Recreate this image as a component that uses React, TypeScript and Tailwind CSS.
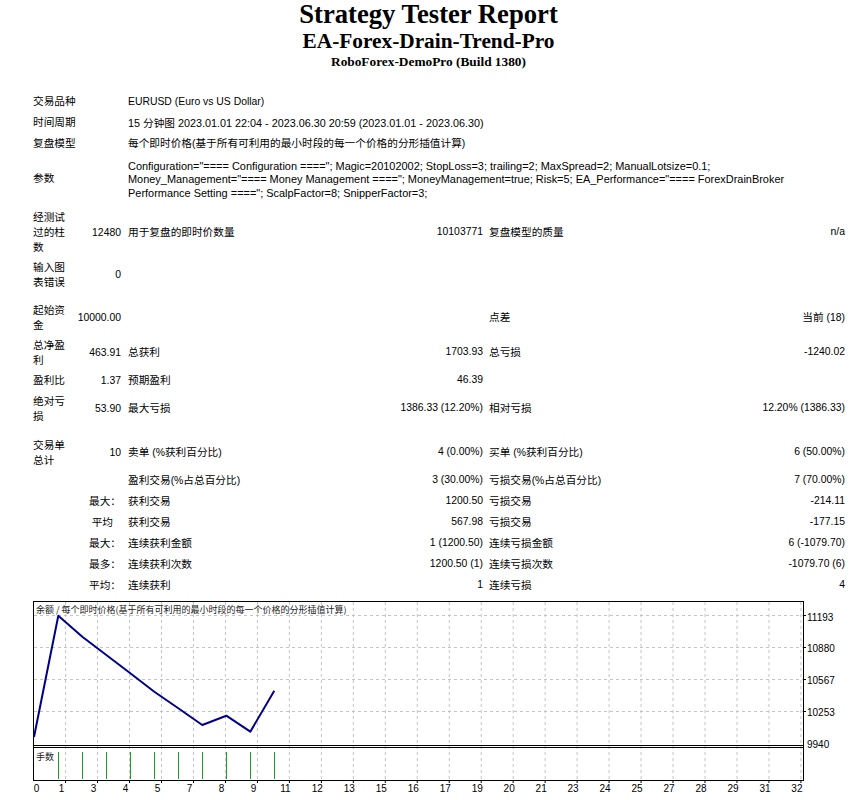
const cjkRun = /([\u2e80-\u9fff\u3000-\u303f\uff00-\uffef]+)/;

// Latin runs stay at the narrower size, CJK runs get 8pt like the report
function T({ s }: { s?: string }) {
  if (!s) return null;
  return (
    <>
      {s.split(cjkRun).map((p, i) =>
        i % 2 ? (
          <span key={i} className="text-[10.67px]">
            {p}
          </span>
        ) : (
          p
        )
      )}
    </>
  );
}

type Stat = {
  h: string;
  a?: string;
  b?: string;
  c?: string;
  d?: string;
  e?: string;
  f?: string;
  pad?: boolean;
};

const stats: (Stat | string)[] = [
  'h-[6px]',
  { h: 'h-[49px]', a: '经测试过的柱数', b: '12480', c: '用于复盘的即时价数量', d: '10103771', e: '复盘模型的质量', f: 'n/a' },
  { h: 'h-[35px]', a: '输入图表错误', b: '0' },
  'h-[8px]',
  { h: 'h-[35px]', a: '起始资金', b: '10000.00', e: '点差', f: '当前 (18)' },
  { h: 'h-[35px]', a: '总净盈利', b: '463.91', c: '总获利', d: '1703.93', e: '总亏损', f: '-1240.02' },
  { h: 'h-[21px]', a: '盈利比', b: '1.37', c: '预期盈利', d: '46.39' },
  { h: 'h-[35px]', a: '绝对亏损', b: '53.90', c: '最大亏损', d: '1386.33 (12.20%)', e: '相对亏损', f: '12.20% (1386.33)' },
  'h-[9px]',
  { h: 'h-[35px]', a: '交易单总计', b: '10', c: '卖单 (%获利百分比)', d: '4 (0.00%)', e: '买单 (%获利百分比)', f: '6 (50.00%)' },
  { h: 'h-[21px]', c: '盈利交易(%占总百分比)', d: '3 (30.00%)', e: '亏损交易(%占总百分比)', f: '7 (70.00%)' },
  { h: 'h-[21px]', b: '最大：', c: '获利交易', d: '1200.50', e: '亏损交易', f: '-214.11' },
  { h: 'h-[21px]', b: '平均', c: '获利交易', d: '567.98', e: '亏损交易', f: '-177.15', pad: true },
  { h: 'h-[21px]', b: '最大：', c: '连续获利金额', d: '1 (1200.50)', e: '连续亏损金额', f: '6 (-1079.70)' },
  { h: 'h-[21px]', b: '最多：', c: '连续获利次数', d: '1200.50 (1)', e: '连续亏损次数', f: '-1079.70 (6)' },
  { h: 'h-[21px]', b: '平均：', c: '连续获利', d: '1', e: '连续亏损', f: '4' },
];

const info = [
  ['交易品种', 'EURUSD (Euro vs US Dollar)', ''],
  ['时间周期', '15 分钟图 2023.01.01 22:04 - 2023.06.30 20:59 (2023.01.01 - 2023.06.30)', 'text-[10.8px]'],
  ['复盘模型', '每个即时价格(基于所有可利用的最小时段的每一个价格的分形插值计算)', ''],
];

const params = [
  'Configuration="==== Configuration ===="; Magic=20102002; StopLoss=3; trailing=2; MaxSpread=2; ManualLotsize=0.1;',
  'Money_Management="==== Money Management ===="; MoneyManagement=true; Risk=5; EA_Performance="==== ForexDrainBroker',
  'Performance Setting ===="; ScalpFactor=8; SnipperFactor=3;',
];

const gridX = Array.from({ length: 24 }, (_, i) => 65.6 + i * 31.97);
const xLabels = ['1', '3', '4', '5', '7', '8', '9', '11', '12', '13', '15', '16', '17', '19', '20', '21', '23', '24', '25', '27', '28', '29', '31', '32'];
const gridY = [615.5, 647.5, 679.5, 711.5];
const yLabels = [
  ['11193', 617],
  ['10880', 648],
  ['10567', 680],
  ['10253', 712],
  ['9940', 744],
] as const;
const balance: [number, number][] = [
  [34, 737],
  [58.3, 615.7],
  [82.3, 636.7],
  [106.3, 655],
  [130.3, 673.3],
  [154.3, 691.7],
  [178.3, 708.3],
  [202.3, 725],
  [226.3, 715.7],
  [250.3, 731.7],
  [274.3, 690.7],
];
const lots = [58.5, 82.5, 106.5, 130.5, 154.5, 178.5, 202.5, 226.5, 250.5, 274.5];

function BalanceChart() {
  return (
    <svg width="857" height="204" className="block" fontFamily="'Liberation Sans', 'Noto Sans CJK SC', sans-serif">
      <g transform="translate(0,-596)">
        {gridY.map((y) => (
          <line key={y} x1="34" x2="803" y1={y} y2={y} stroke="#c4c4c4" strokeDasharray="3 3" />
        ))}
        {gridX.map((x) => (
          <line key={x} x1={x} x2={x} y1="602" y2="780" stroke="#c4c4c4" strokeDasharray="3 3" />
        ))}
        <rect x="33.5" y="601.5" width="770" height="179" fill="none" stroke="#000" />
        <line x1="33" x2="804" y1="745.5" y2="745.5" stroke="#000" />
        <line x1="33" x2="804" y1="747.5" y2="747.5" stroke="#000" />
        {gridY.map((y) => (
          <line key={'t' + y} x1="803" x2="806" y1={y} y2={y} stroke="#000" />
        ))}
        {gridX.map((x) => (
          <line key={'b' + x} x1={x} x2={x} y1="780" y2="783" stroke="#000" />
        ))}
        <polyline
          points={balance.map((p) => p.join(',')).join(' ')}
          fill="none"
          stroke="#00008b"
          strokeWidth="2"
          strokeLinejoin="round"
        />
        {lots.map((x) => (
          <line key={'l' + x} x1={x} x2={x} y1="752" y2="779" stroke="#1aa01a" />
        ))}
        <text x="36" y="613" fontSize="9" fill="#222" fontFamily="'Noto Sans CJK SC', sans-serif">
          余额 / 每个即时价格(基于所有可利用的最小时段的每一个价格的分形插值计算)
        </text>
        <text x="36" y="760" fontSize="9" fill="#222" fontFamily="'Noto Sans CJK SC', sans-serif">
          手数
        </text>
        <text x="36.5" y="792" fontSize="10" textAnchor="middle" fill="#000">
          0
        </text>
        {xLabels.map((l, i) => (
          <text key={l} x={gridX[i] - 4} y="792" fontSize="10" textAnchor="middle" fill="#000">
            {l}
          </text>
        ))}
        {yLabels.map(([l, y]) => (
          <text key={l} x="807" y={y + 3.5} fontSize="10" fill="#000">
            {l}
          </text>
        ))}
      </g>
    </svg>
  );
}

export default function App() {
  return (
    <div className="w-[857px] h-[800px] overflow-hidden bg-white text-black">
      <div className="text-center font-bold font-['Liberation_Serif','Times_New_Roman',serif]">
        <div className="text-[26.67px] leading-[28px]">Strategy Tester Report</div>
        <div className="text-[21.33px] leading-[26px]">EA-Forex-Drain-Trend-Pro</div>
        <div className="text-[13.33px] leading-[15px]">RoboForex-DemoPro (Build 1380)</div>
      </div>

      <div className="mt-[22px] ml-[33px] w-[812px] text-[10.4px] leading-[14px] font-['Liberation_Sans','Noto_Sans_CJK_SC',sans-serif]">
        {info.map(([k, v, size]) => (
          <div key={k} className="flex h-[21px] items-center">
            <div className="w-[95px] shrink-0">
              <T s={k} />
            </div>
            <div className={size}>
              <T s={v} />
            </div>
          </div>
        ))}
        <div className="flex h-[48px] items-center">
          <div className="w-[95px] shrink-0">
            <T s="参数" />
          </div>
          <div className="pt-[4px] text-[10.95px] leading-[13.5px]">
            {params.map((p) => (
              <div key={p} className="whitespace-nowrap">
                {p}
              </div>
            ))}
          </div>
        </div>

        {stats.map((r, i) =>
          typeof r === 'string' ? (
            <div key={i} className={r} />
          ) : (
            <div key={i} className={`flex items-center ${r.h}`}>
              <div className="w-[35px] shrink-0">
                <T s={r.a} />
              </div>
              <div className={`w-[53px] shrink-0 text-right whitespace-nowrap ${r.pad ? 'pr-[8px]' : ''}`}>
                <T s={r.b} />
              </div>
              <div className="w-[7px] shrink-0" />
              <div className="flex w-[355px] shrink-0 justify-between whitespace-nowrap">
                <span>
                  <T s={r.c} />
                </span>
                <span>
                  <T s={r.d} />
                </span>
              </div>
              <div className="w-[6px] shrink-0" />
              <div className="flex w-[356px] shrink-0 justify-between whitespace-nowrap">
                <span>
                  <T s={r.e} />
                </span>
                <span>
                  <T s={r.f} />
                </span>
              </div>
            </div>
          )
        )}
      </div>

      <BalanceChart />
    </div>
  );
}
